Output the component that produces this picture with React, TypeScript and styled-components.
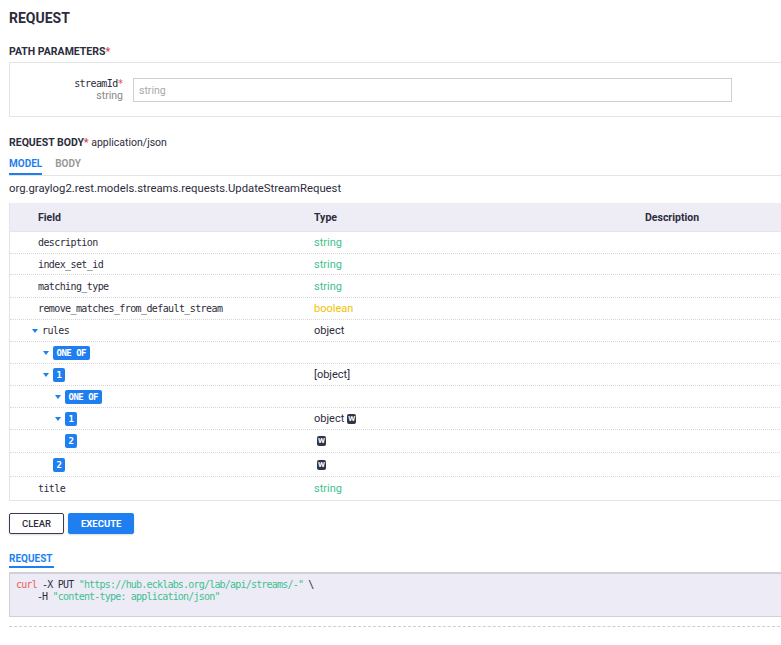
import styled, { createGlobalStyle } from "styled-components";

const GlobalStyle = createGlobalStyle`
    html, body {
        margin: 0;
        padding: 0;
        background: #ffffff;
        overflow: hidden;
    }
    body {
        font-family: Roboto, "Open Sans", sans-serif;
        color: #2c2c3c;
    }
`;

const BLUE = "#1f7ff0";
const GREEN = "#3fbf8f";
const MONO = `"DejaVu Sans Mono", "Liberation Mono", monospace`;

const StyledMain = styled.main`
    width: 800px;
    padding: 9px 0 0 9px;
    box-sizing: border-box;
`;

const StyledTitle = styled.h2`
    margin: 0 0 18px;
    font-size: 14px;
    font-weight: 700;
    line-height: 18px;
`;

const StyledLabel = styled.div`
    font-size: 10.5px;
    font-weight: 700;
    text-transform: uppercase;
    line-height: 14px;
    margin-bottom: 3px;
`;

const Star = styled.span`
    color: #e04646;
`;

const Mime = styled.span`
    font-weight: 400;
    text-transform: none;
    font-size: 10.5px;
`;

const ParamBox = styled.div`
    border: 1px solid #e4e4e4;
    border-right: none;
    padding: 15px 0 14px;
    display: flex;
    align-items: center;
`;

const ParamName = styled.div`
    width: 113px;
    flex: none;
    text-align: right;
    padding-right: 10px;
    line-height: 12px;
`;

const MonoName = styled.div`
    font-family: ${MONO};
    font-size: 10px;
    letter-spacing: -0.6px;
    white-space: nowrap;
`;

const ParamType = styled.div`
    font-size: 10.5px;
    color: #888;
`;

const StyledInput = styled.input`
    width: 599px;
    height: 24px;
    box-sizing: border-box;
    border: 1px solid #cfcfd4;
    padding: 0 5px;
    font-family: Roboto, sans-serif;
    font-size: 10.5px;
    color: #2c2c3c;
    outline: none;
    &::placeholder {
        color: #a8a8ad;
    }
`;

const BodySection = styled.div`
    margin-top: 19px;
`;

const TabBar = styled.div`
    display: flex;
    gap: 13px;
    border-bottom: 1px solid #e4e4e4;
`;

const Tab = styled.div<{ $active?: boolean }>`
    font-size: 10px;
    font-weight: 700;
    line-height: 13px;
    color: ${(p) => (p.$active ? BLUE : "#9a9a9a")};
    border-bottom: 2px solid ${(p) => (p.$active ? BLUE : "transparent")};
    padding: 4px 0 3px;
    text-transform: uppercase;
`;

const ClassName = styled.div`
    font-size: 11.3px;
    line-height: 16px;
    margin: 5px 0 6px;
`;

const Table = styled.div`
    border-left: 1px solid #e4e4e4;
    border-bottom: 1px solid #e4e4e4;
`;

const Row = styled.div<{ $head?: boolean; $h?: number }>`
    display: grid;
    grid-template-columns: 304px 331px 1fr;
    align-items: center;
    box-sizing: border-box;
    height: ${(p) => (p.$head ? 29 : p.$h ?? 22)}px;
    background: ${(p) => (p.$head ? "#eeedf6" : "transparent")};
    border-bottom: 1px ${(p) => (p.$head ? "solid #e4e4ea" : "dotted #d8d8d8")};
    font-size: ${(p) => (p.$head ? "10.5px" : "11px")};
    font-weight: ${(p) => (p.$head ? 700 : 400)};
    &:last-child {
        border-bottom: none;
    }
`;

const FieldCell = styled.div<{ $pad: number }>`
    display: flex;
    align-items: center;
    padding-left: ${(p) => p.$pad}px;
`;

const HeadCell = styled.div<{ $pad?: number }>`
    padding-left: ${(p) => p.$pad ?? 0}px;
`;

const FieldName = styled.span`
    font-family: ${MONO};
    font-size: 10px;
    letter-spacing: -0.6px;
`;

const Toggle = styled.span<{ $open?: boolean }>`
    width: 10px;
    flex: none;
    display: flex;
    align-items: center;
    &::before {
        content: "";
        display: ${(p) => (p.$open ? "block" : "none")};
        border-left: 3px solid transparent;
        border-right: 3px solid transparent;
        border-top: 4px solid ${BLUE};
    }
`;

const Badge = styled.span`
    background: ${BLUE};
    color: #fff;
    font-family: ${MONO};
    font-size: 9px;
    font-weight: 700;
    letter-spacing: -0.5px;
    line-height: 14px;
    height: 14px;
    padding: 0 4px 0 3.5px;
    border-radius: 2px;
`;

const TypeCell = styled.div<{ $color?: string }>`
    color: ${(p) => p.$color ?? "#2c2c3c"};
    display: flex;
    align-items: center;
    gap: 3px;
`;

const WriteOnly = styled.span<{ $lead?: boolean }>`
    display: inline-block;
    width: 9px;
    height: 10px;
    margin-left: ${(p) => (p.$lead ? 3 : 0)}px;
    background: #33334a;
    color: #fff;
    border-radius: 2px;
    font-size: 8px;
    font-weight: 700;
    line-height: 10px;
    text-align: center;
`;

const Actions = styled.div`
    display: flex;
    gap: 4px;
    margin-top: 12px;
`;

const Button = styled.button<{ $primary?: boolean }>`
    height: 21px;
    padding: 0 12px;
    font-family: Roboto, sans-serif;
    font-size: 9.5px;
    font-weight: ${(p) => (p.$primary ? 700 : 500)};
    color: ${(p) => (p.$primary ? "#fff" : "#2c2c3c")};
    background: ${(p) => (p.$primary ? BLUE : "#fff")};
    border: 1px solid ${(p) => (p.$primary ? BLUE : "#3b3b55")};
    border-radius: 2px;
    box-shadow: 0 1px 2px rgba(0, 0, 0, 0.15);
`;

const ResultTab = styled.div`
    margin-top: 18px;
    display: inline-block;
    font-size: 10px;
    font-weight: 700;
    color: ${BLUE};
    line-height: 13px;
    border-bottom: 2px solid ${BLUE};
    padding-bottom: 1px;
    width: 45px;
`;

const Code = styled.pre`
    margin: 4px 0 0;
    height: 45px;
    box-sizing: border-box;
    background: #edecf6;
    border: 1px solid #d0d0d6;
    border-top-width: 2px;
    border-right: none;
    padding: 5px 6px;
    font-family: ${MONO};
    font-size: 10px;
    letter-spacing: -0.8px;
    line-height: 12px;
    color: #2c2c3c;
`;

const Kw = styled.span`
    color: #ef5a5a;
`;

const Str = styled.span`
    color: ${GREEN};
`;

const Dashed = styled.div`
    margin-top: 9px;
    border-top: 1px dashed #cfcfcf;
`;

type Node = {
    pad: number;
    open?: boolean;
    name?: string;
    badge?: string;
    type?: string;
    color?: string;
    w?: "after" | "only";
    h?: number;
};

const rows: Node[] = [
    { pad: 28, name: "description", type: "string", color: GREEN },
    { pad: 28, name: "index_set_id", type: "string", color: GREEN, h: 21 },
    { pad: 28, name: "matching_type", type: "string", color: GREEN, h: 23 },
    { pad: 28, name: "remove_matches_from_default_stream", type: "boolean", color: "#f5c000" },
    { pad: 22, open: true, name: "rules", type: "object" },
    { pad: 33, open: true, badge: "ONE OF" },
    { pad: 33, open: true, badge: "1", type: "[object]" },
    { pad: 45, open: true, badge: "ONE OF" },
    { pad: 45, open: true, badge: "1", type: "object", w: "after" },
    { pad: 45, badge: "2", w: "only", h: 23 },
    { pad: 33, badge: "2", w: "only", h: 24 },
    { pad: 28, name: "title", type: "string", color: GREEN, h: 23 },
];

export default function App() {
    return (
        <StyledMain>
            <GlobalStyle />
            <StyledTitle>REQUEST</StyledTitle>
            <StyledLabel>
                Path Parameters<Star>*</Star>
            </StyledLabel>
            <ParamBox>
                <ParamName>
                    <MonoName>
                        streamId<Star>*</Star>
                    </MonoName>
                    <ParamType>string</ParamType>
                </ParamName>
                <StyledInput placeholder="string" />
            </ParamBox>

            <BodySection>
                <StyledLabel>
                    Request Body<Star>*</Star> <Mime>application/json</Mime>
                </StyledLabel>
                <TabBar>
                    <Tab $active>Model</Tab>
                    <Tab>Body</Tab>
                </TabBar>
                <ClassName>org.graylog2.rest.models.streams.requests.UpdateStreamRequest</ClassName>
                <Table>
                    <Row $head>
                        <HeadCell $pad={28}>Field</HeadCell>
                        <HeadCell>Type</HeadCell>
                        <HeadCell>Description</HeadCell>
                    </Row>
                    {rows.map((r, i) => (
                        <Row key={i} $h={r.h}>
                            <FieldCell $pad={r.pad}>
                                {r.pad !== 28 && <Toggle $open={r.open} />}
                                {r.name && <FieldName>{r.name}</FieldName>}
                                {r.badge && <Badge>{r.badge}</Badge>}
                            </FieldCell>
                            <TypeCell $color={r.color}>
                                {r.type}
                                {r.w && <WriteOnly $lead={r.w === "only"}>W</WriteOnly>}
                            </TypeCell>
                            <div />
                        </Row>
                    ))}
                </Table>
            </BodySection>

            <Actions>
                <Button>CLEAR</Button>
                <Button $primary>EXECUTE</Button>
            </Actions>

            <ResultTab>REQUEST</ResultTab>
            <Code>
                <Kw>curl</Kw> -X PUT <Str>"https://hub.ecklabs.org/lab/api/streams/-"</Str> \{"\n"}
                {"    "}-H <Str>"content-type: application/json"</Str>
            </Code>
            <Dashed />
        </StyledMain>
    );
}
